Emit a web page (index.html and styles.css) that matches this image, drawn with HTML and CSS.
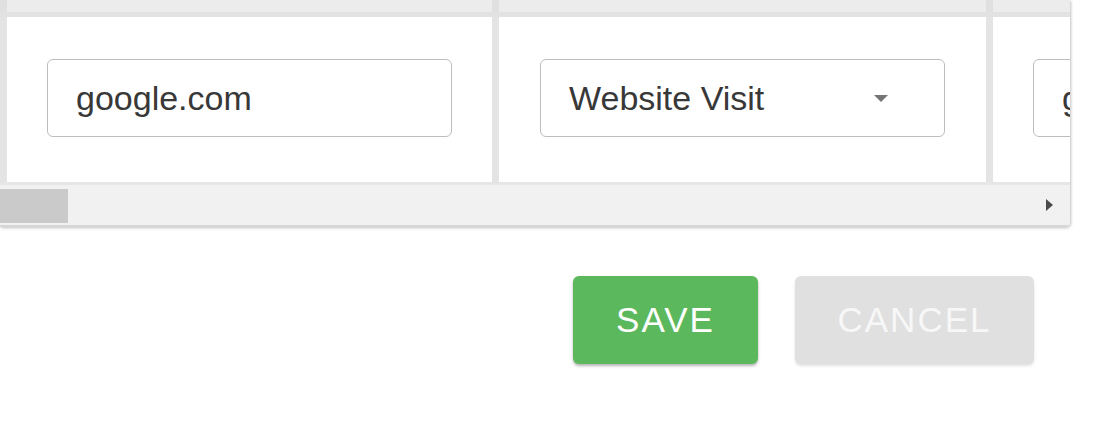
FILE: index.html
```html
<!DOCTYPE html>
<html lang="en">
<head>
  <meta charset="UTF-8"/>
  <title>Edit Sources</title>
  <link rel="stylesheet" href="styles.css">
</head>
<body>

  <!-- Table card -->
  <div class="card">
    <div class="row head-row">
      <div class="cell first"></div>
      <div class="cell"></div>
      <div class="cell last"></div>
    </div>
    <div class="row body-row">
      <div class="cell first">
        <input class="field" type="text" value="google.com"/>
      </div>
      <div class="cell">
        <div class="field select">
          <span>Website Visit</span>
          <span class="caret"></span>
        </div>
      </div>
      <div class="cell last">
        <input class="field" type="text" value="google"/>
      </div>
    </div>
    <div class="scrollbar">
      <div class="thumb"></div>
      <span class="arrow"></span>
    </div>
  </div>

  <!-- Actions -->
  <div class="actions">
    <button class="btn btn-save">SAVE</button>
    <button class="btn btn-cancel">CANCEL</button>
  </div>

</body>
</html>
```
FILE: styles.css
```css
* {
  margin: 0;
  padding: 0;
  box-sizing: border-box;
  font-family: 'Liberation Sans', Arial, sans-serif;
}

body {
  background: #fff;
  width: 1098px;
  height: 424px;
  overflow: hidden;
}

.card {
  width: 1070px;
  overflow: hidden;
  border-bottom-right-radius: 5px;
  box-shadow: 1px 1px 3px rgba(0, 0, 0, 0.25);
}

.row {
  display: flex;
}

.cell {
  flex: none;
  border-left: 7px solid #e4e4e4;
}

.cell.first {
  width: 492px;
}

.cell:nth-child(2) {
  width: 494px;
}

.cell.last {
  flex: 1;
}

.head-row {
  height: 17px;
  background: #ececec;
  border-bottom: 5px solid #e2e2e2;
}

.head-row .cell {
  border-left-color: #e0e0e0;
}

.body-row .cell {
  background: #fff;
  padding: 42px 0 44px 40px;
  height: 165px;
}

.body-row .cell:nth-child(2) {
  padding-left: 41px;
}

.field {
  display: block;
  width: 405px;
  height: 78px;
  border: 1px solid #bdbdbd;
  border-radius: 6px;
  padding: 0 28px;
  font-size: 34px;
  color: #383838;
  background: #fff;
  outline: none;
}

.select {
  display: flex;
  align-items: center;
  justify-content: space-between;
  padding-right: 56px;
}

.caret {
  width: 0;
  height: 0;
  border-left: 7px solid transparent;
  border-right: 7px solid transparent;
  border-top: 7px solid #757575;
}

.scrollbar {
  position: relative;
  height: 45px;
  background: #f1f1f1;
  border-top: 3px solid #e6e6e6;
  border-bottom: 2px solid #d6d6d6;
  padding-top: 4px;
}

.thumb {
  width: 68px;
  height: 34px;
  background: #cacaca;
}

.arrow {
  position: absolute;
  left: 1046px;
  top: 14px;
  width: 0;
  height: 0;
  border-top: 6px solid transparent;
  border-bottom: 6px solid transparent;
  border-left: 7px solid #4a4a4a;
}

.actions {
  display: flex;
  justify-content: flex-end;
  gap: 37px;
  margin-top: 49px;
  padding-right: 64px;
}

.btn {
  height: 88px;
  padding: 0;
  border: none;
  border-radius: 6px;
  font-size: 35px;
  letter-spacing: 2px;
  color: #fff;
  cursor: pointer;
}

.btn-save {
  width: 185px;
  background: #5cb85c;
  box-shadow: 0 2px 3px rgba(0, 0, 0, 0.3);
}

.btn-cancel {
  width: 239px;
  background: #e0e0e0;
  color: #f7f7f7;
  box-shadow: 0 2px 3px rgba(0, 0, 0, 0.12);
}
```
